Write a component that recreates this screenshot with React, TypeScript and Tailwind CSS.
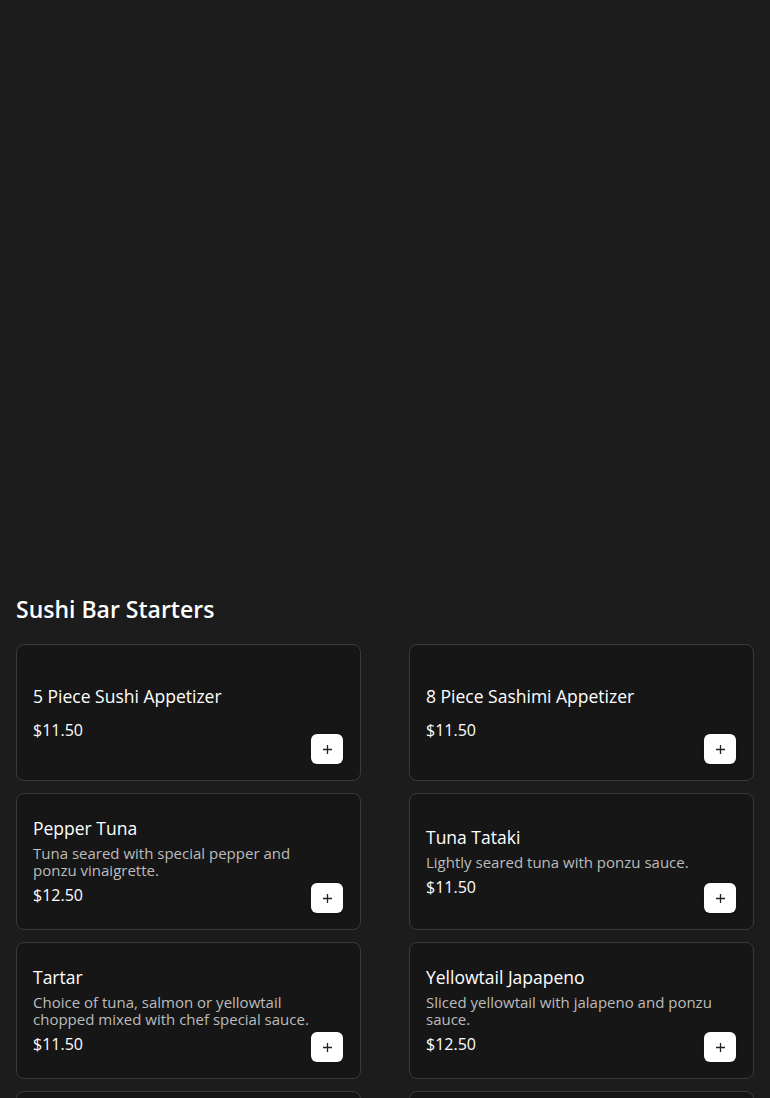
import React from "react";

type Item = { name: string; desc?: string; price: string };

const items: Item[] = [
  { name: "5 Piece Sushi Appetizer", price: "$11.50" },
  { name: "8 Piece Sashimi Appetizer", price: "$11.50" },
  { name: "Pepper Tuna", desc: "Tuna seared with special pepper and ponzu vinaigrette.", price: "$12.50" },
  { name: "Tuna Tataki", desc: "Lightly seared tuna with ponzu sauce.", price: "$11.50" },
  { name: "Tartar", desc: "Choice of tuna, salmon or yellowtail chopped mixed with chef special sauce.", price: "$11.50" },
  { name: "Yellowtail Japapeno", desc: "Sliced yellowtail with jalapeno and ponzu sauce.", price: "$12.50" },
  { name: "Salmon Carpaccio", desc: "Thin sliced salmon with special sauce.", price: "$12.50" },
  { name: "Spicy Tuna Tartar", desc: "Chopped spicy tuna with avocado.", price: "$12.50" },
];

function Card({ item }: { item: Item }) {
  return (
    <div className="relative flex h-[137px] items-center rounded-lg border border-[#3a3a3a] bg-[#161616] pl-4 pr-10">
      <div className="flex flex-col">
        <div className="text-[17.5px] leading-6 font-medium text-white">{item.name}</div>
        {item.desc ? (
          <div className="mt-[5px] text-[15px] leading-[17px] text-[#bcbcbc]">{item.desc}</div>
        ) : null}
        <div className={(item.desc ? "mt-1" : "mt-[10px]") + " text-[16px] leading-6 text-white"}>{item.price}</div>
      </div>
      <button className="absolute right-[17px] bottom-4 flex h-[30px] w-8 items-center justify-center rounded-md bg-white shadow">
        <svg width="11" height="11" viewBox="0 0 11 11">
          <path d="M5.5 1v9M1 5.5h9" stroke="#222" strokeWidth="1.3" />
        </svg>
      </button>
    </div>
  );
}

export default function App() {
  return (
    <div className="min-h-[1098px] bg-[#1c1c1c]" style={{ fontFamily: "'Open Sans', sans-serif" }}>
      <div className="h-[594px]" />
      <section className="px-4">
        <h2 className="text-[23px] leading-[30px] font-semibold text-white">Sushi Bar Starters</h2>
        <div className="mt-5 grid grid-cols-2 gap-x-12 gap-y-3">
          {items.map((it) => (
            <Card key={it.name} item={it} />
          ))}
        </div>
      </section>
    </div>
  );
}
